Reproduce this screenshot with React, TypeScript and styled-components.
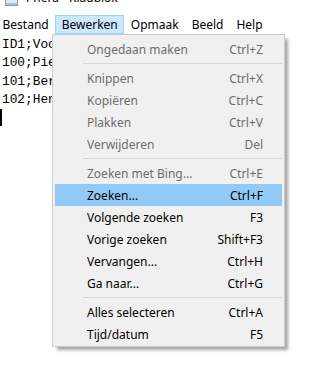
import React from "react";
import styled, { createGlobalStyle } from "styled-components";

const Global = createGlobalStyle`
  html, body { margin: 0; padding: 0; background: #ffffff; }
  body { width: 323px; height: 371px; overflow: hidden; }
`;

const UI_FONT = `"Noto Sans", "Open Sans", sans-serif`;

const Window = styled.div`
  position: relative;
  width: 323px;
  height: 371px;
  background: #ffffff;
  overflow: hidden;
  font-family: ${UI_FONT};
`;

const TitleBar = styled.div`
  height: 15px;
  display: flex;
  align-items: flex-start;
  gap: 8px;
  padding-left: 5px;
  overflow: hidden;
`;

const TitleIcon = styled.svg`
  margin-top: -8px;
  flex: none;
`;

const TitleText = styled.div`
  margin-top: -10px;
  font-size: 12px;
  line-height: 16px;
  color: #000;
`;

const MenuBar = styled.div`
  height: 19px;
  display: flex;
  align-items: stretch;
  margin-left: -4px;
`;

const MenuBarItem = styled.div<{ $open?: boolean }>`
  display: flex;
  align-items: center;
  padding: 0 5.5px;
  font-size: 12px;
  color: #000;
  border: 1px solid ${(p) => (p.$open ? "#99d1ff" : "transparent")};
  background: ${(p) => (p.$open ? "#cce8ff" : "transparent")};
`;

const Editor = styled.div`
  padding: 2px 0 0 2px;
  font-family: "Liberation Mono", "DejaVu Sans Mono", monospace;
  font-size: 12.8px;
  line-height: 18.3px;
  color: #000;
  white-space: pre;
`;

const Caret = styled.div`
  width: 2px;
  height: 17px;
  margin-left: -2px;
  background: #000;
`;

const Dropdown = styled.div`
  position: absolute;
  left: 52px;
  top: 34px;
  width: 231px;
  padding: 3px 0 1px;
  background: #f0f0f0;
  border: 1px solid #cccccc;
  box-shadow: 4px 4px 3px -1px rgba(0, 0, 0, 0.35);
  font-family: ${UI_FONT};
`;

const Item = styled.div<{ $disabled?: boolean; $active?: boolean }>`
  height: 22px;
  margin: 0 2px;
  padding: 0 19px 0 32px;
  display: flex;
  align-items: center;
  justify-content: space-between;
  font-size: 12px;
  color: ${(p) => (p.$disabled ? "#6d6d6d" : "#000000")};
  background: ${(p) => (p.$active ? "#91c9f7" : "transparent")};
`;

const Separator = styled.div`
  height: 7px;
  display: flex;
  align-items: center;
  padding: 0 2px 0 30px;
  &::after {
    content: "";
    flex: 1;
    height: 1px;
    background: #d7d7d7;
  }
`;

type Entry =
  | { sep: true }
  | { label: string; key: string; disabled?: boolean; active?: boolean };

const entries: Entry[] = [
  { label: "Ongedaan maken", key: "Ctrl+Z", disabled: true },
  { sep: true },
  { label: "Knippen", key: "Ctrl+X", disabled: true },
  { label: "Kopiëren", key: "Ctrl+C", disabled: true },
  { label: "Plakken", key: "Ctrl+V", disabled: true },
  { label: "Verwijderen", key: "Del", disabled: true },
  { sep: true },
  { label: "Zoeken met Bing...", key: "Ctrl+E", disabled: true },
  { label: "Zoeken...", key: "Ctrl+F", active: true },
  { label: "Volgende zoeken", key: "F3" },
  { label: "Vorige zoeken", key: "Shift+F3" },
  { label: "Vervangen...", key: "Ctrl+H" },
  { label: "Ga naar...", key: "Ctrl+G" },
  { sep: true },
  { label: "Alles selecteren", key: "Ctrl+A" },
  { label: "Tijd/datum", key: "F5" },
];

const lines = [
  "ID1;Voornaam;Achternaam",
  "100;Piet;Jansen",
  "101;Bert;de Vries",
  "102;Henk;Bakker",
];

export default function App() {
  return (
    <>
      <Global />
      <Window>
        <TitleBar>
          <TitleIcon width="13" height="14" viewBox="0 0 13 14">
            <rect x="0.5" y="0.5" width="12" height="13" fill="#dfeaf5" stroke="#7f9db9" />
            <rect x="1" y="11" width="11" height="2" fill="#a9c1d9" />
          </TitleIcon>
          <TitleText>Phera - Kladblok</TitleText>
        </TitleBar>
        <MenuBar>
          <MenuBarItem>Bestand</MenuBarItem>
          <MenuBarItem $open>Bewerken</MenuBarItem>
          <MenuBarItem>Opmaak</MenuBarItem>
          <MenuBarItem>Beeld</MenuBarItem>
          <MenuBarItem>Help</MenuBarItem>
        </MenuBar>
        <Editor>
          {lines.map((l) => (
            <div key={l}>{l}</div>
          ))}
          <Caret />
        </Editor>
        <Dropdown>
          {entries.map((e, i) =>
            "sep" in e ? (
              <Separator key={i} />
            ) : (
              <Item key={i} $disabled={e.disabled} $active={e.active}>
                <span>{e.label}</span>
                <span>{e.key}</span>
              </Item>
            )
          )}
        </Dropdown>
      </Window>
    </>
  );
}
